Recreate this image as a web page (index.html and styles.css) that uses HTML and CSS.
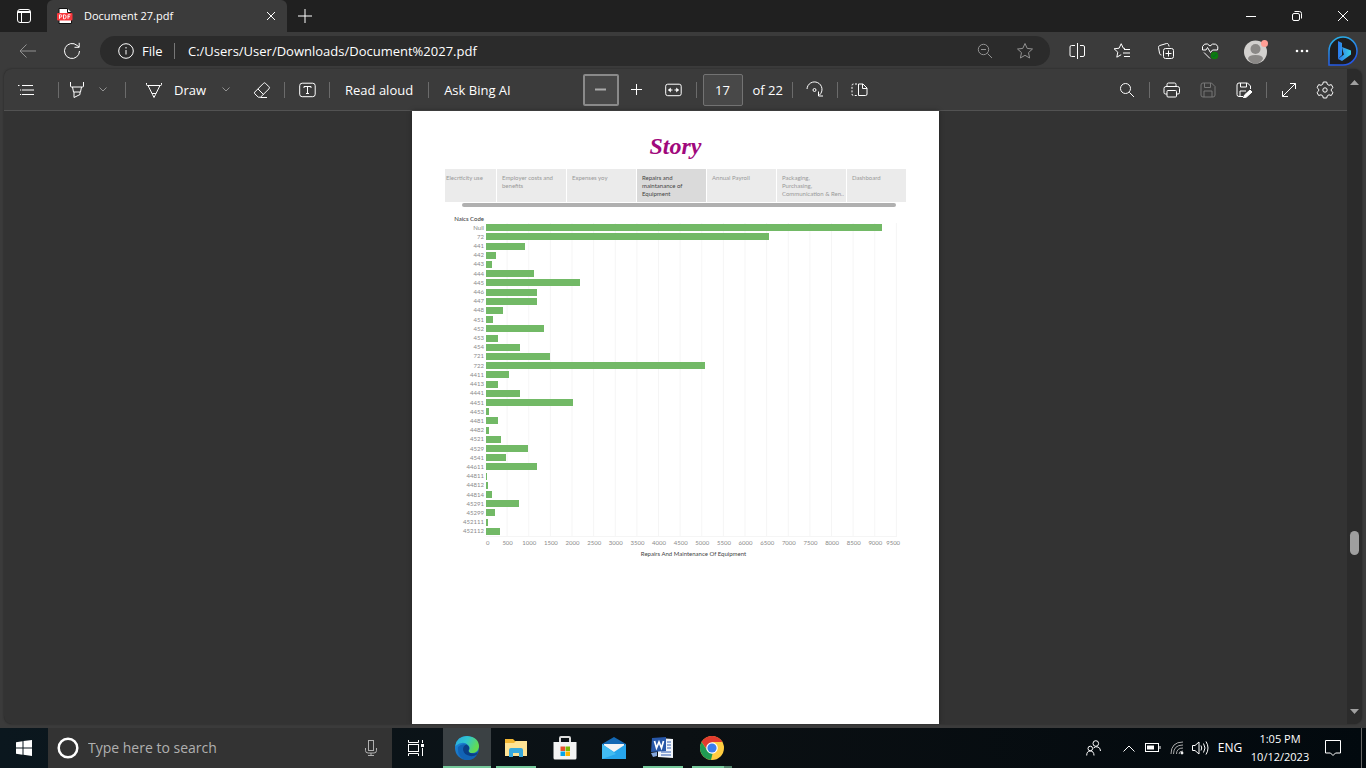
FILE: index.html
```html
<!DOCTYPE html>
<html lang="en">
<head>
<meta charset="utf-8">
<title>Document 27.pdf</title>
<link rel="stylesheet" href="styles.css">
</head>
<body>
<header class="titlebar">
  <button class="tab-menu" aria-label="Tab actions"><svg width="16" height="16" viewBox="0 0 16 16"><rect x="1.5" y="1.5" width="13" height="13" rx="2.5"/><path d="M2 3.5h12M2 4.5h12M5.500 5v9" /></svg></button>
  <div class="tab">
    <svg class="pdf-icon" width="16" height="16" viewBox="0 0 16 16"><path d="M2 .5h8.500l4 4V15.500H2z" fill="#fff" stroke="#111"/><path d="M10.500 .5v4h4" fill="#fff" stroke="#111"/><rect x="0" y="5" width="15.500" height="7.500" rx="1" fill="#f8383d" stroke="none"/><path d="M2.500 10.800V6.800h1.200a1.100 1.100 0 0 1 0 2.300H2.500M6.500 6.800h1q1.600 0 1.600 2t-1.600 2h-1zM11 10.800v-4h2.500M11 8.700h2" fill="none" stroke="#fff" stroke-width=".9"/></svg>
    <span class="tab-title">Document 27.pdf</span>
    <button class="tab-close" aria-label="Close tab"><svg width="10" height="10" viewBox="0 0 10 10"><path d="M1 1l8 8M9 1L1 9"/></svg></button>
  </div>
  <button class="new-tab" aria-label="New tab"><svg width="14" height="14" viewBox="0 0 14 14"><path d="M7 0v14M0 7h14"/></svg></button>
  <div class="window-buttons">
    <button aria-label="Minimize"><svg width="10" height="10" viewBox="0 0 10 10"><path d="M0 5.500h10"/></svg></button>
    <button aria-label="Restore"><svg width="10" height="10" viewBox="0 0 10 10"><rect x=".5" y="2.500" width="7" height="7" rx="1.500"/><path d="M2.500 .5h5q2 0 2 2v5"/></svg></button>
    <button aria-label="Close"><svg width="10" height="10" viewBox="0 0 10 10"><path d="M0 0l10 10M10 0L0 10"/></svg></button>
  </div>
</header>

<nav class="address-row">
  <button class="nav-button dim" aria-label="Back"><svg width="18" height="14" viewBox="0 0 18 14"><path d="M17 7H1M7.500 .5L1 7l6.500 6.500"/></svg></button>
  <button class="nav-button" aria-label="Refresh"><svg width="18" height="18" viewBox="0 0 18 18"><path d="M16.500 9a7.500 7.500 0 1 1-2.500-5.600L16 5M16.200 .8V5.300H11.500"/></svg></button>
  <div class="address">
    <svg width="16" height="16" viewBox="0 0 16 16"><circle cx="8" cy="8" r="7.300"/><path d="M8 7v4.500M8 4v1.500"/></svg>
    <span class="scheme">File</span>
    <input class="url" type="text" aria-label="Address" value="C:/Users/User/Downloads/Document%2027.pdf">
    <button class="dim" aria-label="Zoom"><svg width="16" height="16" viewBox="0 0 16 16"><circle cx="6.500" cy="6.500" r="5.200"/><path d="M10.500 10.500l4.500 4.500M4 6.500h5"/></svg></button>
    <button class="dim" aria-label="Add to favorites"><svg width="18" height="18" viewBox="0 0 18 18"><path d="M9 1.500l2.200 4.900 5.300.6-4 3.600 1.100 5.400L9 13.300 4.400 16l1.100-5.400-4-3.600 5.300-.6z"/></svg></button>
  </div>
  <div class="browser-tools">
    <button aria-label="Split screen"><svg width="18" height="18" viewBox="0 0 18 18"><path d="M7 3.500H3.500Q2 3.500 2 5v8Q2 14.500 3.500 14.500H7M9.500 1v16M12 3.500h3q1.500 0 1.500 1.500v8q0 1.500-1.500 1.500h-3"/></svg></button>
    <button aria-label="Favorites"><svg width="18" height="18" viewBox="0 0 18 18"><path d="M12 6.500L10.300 6.200 8.200 1.700 6.100 6.200l-5 .6 3.700 3.400-1 5 4.400-2.500M11 7.500h6M10 11h7M11 14.500h6"/></svg></button>
    <button aria-label="Collections"><svg width="18" height="18" viewBox="0 0 18 18"><rect x="6.500" y="6.500" width="10" height="10" rx="2"/><path d="M11.500 8.500v6M8.500 11.500h6M4.500 13Q3 13 2.600 11.500L1.500 5.500Q1.300 4 2.800 3.500L9.500 1.500q1.500-.3 2 1l.6 2"/></svg></button>
    <button aria-label="Browser essentials"><svg width="18" height="18" viewBox="0 0 18 18"><path d="M9 4Q6.500 .8 3.500 2.200 .5 4 1.500 8H5l1.500-2.500 3 5L11.500 8h5Q17.800 3.800 14.500 2.200 11.500 1 9 4M3 10.500L9 16.500"/><circle cx="13.500" cy="13.500" r="3.800" fill="#0e7a0d" stroke="none"/><path d="M11.700 13.700l1.200 1.200 2.500-3" stroke="#063"/></svg></button>
    <button aria-label="Profile"><svg width="24" height="26" viewBox="0 0 24 26" stroke="none"><circle cx="11.500" cy="14" r="11.500" fill="#d2d0ce"/><circle cx="11.500" cy="11" r="5" fill="#8a8886"/><path d="M4 21q0-4 7.500-4t7.500 4q-3 4.500-7.500 4.500T4 21z" fill="#8a8886"/><circle cx="20.500" cy="5.500" r="3.500" fill="#ff9f95"/></svg></button>
    <button aria-label="Settings and more"><svg width="14" height="4" viewBox="0 0 14 4" stroke="none"><g fill="#fff"><circle cx="2" cy="2" r="1.300"/><circle cx="7" cy="2" r="1.300"/><circle cx="12" cy="2" r="1.300"/></g></svg></button>
    <button aria-label="Bing"><svg width="30" height="30" viewBox="0 0 30 30"><defs><linearGradient id="ring" x2=".3" y2="1"><stop stop-color="#29b9ea"/><stop offset="1" stop-color="#2457e5"/></linearGradient><linearGradient id="bee" x2="1"><stop stop-color="#2a78ed"/><stop offset="1" stop-color="#3bd0e5"/></linearGradient></defs><path d="M1 29V15A14 14 0 1 1 15 29z" fill="#1d1d1f" stroke="url(#ring)" stroke-width="1.500"/><path d="M10 5l4 2v12l-4 4zM14 11l9 3.500v4L14 25l-4-2 6-4.500-1-3z" fill="url(#bee)" stroke="none"/></svg></button>
  </div>
</nav>

<main class="viewer">
  <section class="viewer-body">
    <div class="toolbar">
      <button class="tool first" aria-label="Contents"><svg width="18" height="12" viewBox="0 0 18 12"><path d="M5 1.500h11M5 6h12M5 10.500h12M1 1.500h1.500M3 6h1.200M3 10.500h1.200"/></svg></button>
      <i class="sep"></i>
      <button class="tool narrow" aria-label="Highlight"><svg width="16" height="18" viewBox="0 0 16 18"><path d="M1.500 1v4q0 1 1 1h11q1 0 1-1V1M3.500 6l1 5h7l1-5M5 11v5.500l6-3V11"/></svg></button>
      <button class="tool" aria-label="Highlight options"><svg class="dim" width="8" height="5" viewBox="0 0 8 5"><path d="M.5 .5L4 4 7.500 .5"/></svg></button>
      <i class="sep"></i>
      <button class="tool draw"><svg width="18" height="18" viewBox="0 0 18 18"><path d="M1.500 2v1.500q0 1 1 1h13q1 0 1-1V2M3 4.500l4.500 9 1.500 3 1.500-3 4.500-9M7 12.500h4"/></svg>Draw</button>
      <button class="tool" aria-label="Draw options"><svg class="dim" width="8" height="5" viewBox="0 0 8 5"><path d="M.5 .5L4 4 7.500 .5"/></svg></button>
      <button class="tool eraser" aria-label="Erase"><svg width="18" height="18" viewBox="0 0 18 18"><path d="M1.800 11L10.500 2.300q1-1 2 0l3.500 3.500q1 1 0 2L7.500 16.200H5.300L1.800 12.800q-.8-.9 0-1.800zM5 8l5.500 5.500M7.500 16.500H14"/></svg></button>
      <i class="sep"></i>
      <button class="tool" aria-label="Add text"><svg width="17" height="16" viewBox="0 0 17 16"><rect x=".7" y="1.200" width="15.500" height="13.500" rx="2.500"/><path d="M5 6V4.500h7V6M8.500 4.500v7M7 11.500h3"/></svg></button>
      <i class="sep"></i>
      <button class="tool text">Read aloud</button>
      <i class="sep"></i>
      <button class="tool text">Ask Bing AI</button>
      <div class="space-before"></div>
      <button class="tool zoom-out" aria-label="Zoom out"><svg width="11" height="3" viewBox="0 0 11 3"><path d="M0 1.500h11" stroke="#aaa" stroke-width="2"/></svg></button>
      <button class="tool zoom-in" aria-label="Zoom in"><svg width="11" height="11" viewBox="0 0 11 11"><path d="M5.500 0v11M0 5.500h11"/></svg></button>
      <button class="tool fit" aria-label="Fit to width"><svg width="17" height="14" viewBox="0 0 17 14"><rect x=".7" y="1.200" width="15.500" height="11.500" rx="2"/><path d="M7.500 7H3.500M9.500 7h4"/><path d="M5.800 4.500v5L3 7zM11.200 4.500v5L14 7z" fill="#fff" stroke="none"/></svg></button>
      <i class="sep tight"></i>
      <input class="page-number" id="page" type="text" value="17"><label class="page-total" for="page">of 22</label>
      <i class="sep"></i>
      <button class="tool" aria-label="Rotate"><svg width="18" height="18" viewBox="0 0 18 18"><path d="M1 8a7.500 7.500 0 1 1 12.500 6M12.500 10.500V15h4.500"/><circle cx="8.500" cy="9" r="1.500"/></svg></button>
      <i class="sep"></i>
      <button class="tool" aria-label="Page view"><svg width="17" height="14" viewBox="0 0 17 14"><path d="M7.500 1H12l4 4v6q0 1.500-1.500 1.500h-7zM11.500 1v4.500H16"/><path d="M6 1H2.500Q1 1 1 2.500V11q0 1.500 1.500 1.500H6" stroke-dasharray="2 1.500"/></svg></button>
      <div class="space-after"></div>
      <button class="tool" aria-label="Find"><svg width="16" height="16" viewBox="0 0 16 16"><circle cx="6.500" cy="6.500" r="5"/><path d="M10.300 10.300L15 15"/></svg></button>
      <i class="sep"></i>
      <div class="file-tools">
        <button class="tool" aria-label="Print"><svg width="18" height="16" viewBox="0 0 18 16"><path d="M4 4V2.500Q4 1 5.500 1h6Q13 1 13 2.500V4M4 12H2.500Q1 12 1 10.500V6.500Q1 4.500 3 4.500h11.500q2 0 2 2v4q0 1.500-1.500 1.500H13.500"/><rect x="4" y="8.500" width="9.500" height="6.500" rx="1"/></svg></button>
        <button class="tool faint" aria-label="Save"><svg width="16" height="16" viewBox="0 0 16 16"><path d="M3 1h8.500L15 4.500V13q0 2-2 2H3q-2 0-2-2V3q0-2 2-2zM4.500 1v4.500h6V1M4 15V9h8v6"/></svg></button>
        <button class="tool" aria-label="Save as"><svg width="17" height="16" viewBox="0 0 17 16"><path d="M7 14.500H3q-2 0-2-2V3q0-2 2-2h8.500L14.500 4v3M4.500 1v4h6V1M4 14V9h6"/><path d="M14 8l2 2-5.500 5-3 1 1-3z" fill="#fff"/></svg></button>
      </div>
      <i class="sep"></i>
      <div class="file-tools">
        <button class="tool" aria-label="Full screen"><svg width="16" height="16" viewBox="0 0 16 16"><path d="M1.500 14.500l13-13M9 1.500h5.500V7M1.500 9v5.500H7"/></svg></button>
        <button class="tool" aria-label="Settings"><svg width="18" height="18" viewBox="0 0 18 18"><path d="M7.300 1h3.400l.6 2.300 1.700 1 2.300-.7 1.700 3-1.700 1.600v1.700l1.700 1.600-1.700 3-2.300-.7-1.700 1-.6 2.200H7.300l-.6-2.200-1.700-1-2.300.7-1.700-3 1.700-1.600V8.200L1 6.600l1.700-3 2.300.7 1.700-1z" stroke-linejoin="round"/><circle cx="9" cy="9" r="2.200"/></svg></button>
      </div>
    </div>

    <article class="page">
      <h1>Story</h1>
      <nav class="story-points">
        <a href="#">Elecrticity use</a>
        <a href="#">Employer costs and benefits</a>
        <a href="#">Expenses yoy</a>
        <a href="#" class="current">Repairs and maintanance of Equipment</a>
        <a href="#">Annual Payroll</a>
        <a href="#">Packaging,<br>Purchasing,<br><span>Communication &amp; Ren..</span></a>
        <a href="#">Dashboard</a>
      </nav>
      <div class="story-scroll"></div>
      <section class="chart">
        <h2>Naics Code</h2>
        <ul class="bars">
          <li><span>Null</span><b style="--v:9150"></b></li>
          <li><span>72</span><b style="--v:6530"></b></li>
          <li><span>441</span><b style="--v:910"></b></li>
          <li><span>442</span><b style="--v:240"></b></li>
          <li><span>443</span><b style="--v:130"></b></li>
          <li><span>444</span><b style="--v:1110"></b></li>
          <li><span>445</span><b style="--v:2175"></b></li>
          <li><span>446</span><b style="--v:1190"></b></li>
          <li><span>447</span><b style="--v:1180"></b></li>
          <li><span>448</span><b style="--v:390"></b></li>
          <li><span>451</span><b style="--v:160"></b></li>
          <li><span>452</span><b style="--v:1335"></b></li>
          <li><span>453</span><b style="--v:275"></b></li>
          <li><span>454</span><b style="--v:780"></b></li>
          <li><span>721</span><b style="--v:1490"></b></li>
          <li><span>722</span><b style="--v:5055"></b></li>
          <li><span>4411</span><b style="--v:540"></b></li>
          <li><span>4413</span><b style="--v:285"></b></li>
          <li><span>4441</span><b style="--v:795"></b></li>
          <li><span>4451</span><b style="--v:2015"></b></li>
          <li><span>4453</span><b style="--v:80"></b></li>
          <li><span>4481</span><b style="--v:275"></b></li>
          <li><span>4482</span><b style="--v:60"></b></li>
          <li><span>4521</span><b style="--v:355"></b></li>
          <li><span>4529</span><b style="--v:970"></b></li>
          <li><span>4541</span><b style="--v:455"></b></li>
          <li><span>44611</span><b style="--v:1190"></b></li>
          <li><span>44811</span><b style="--v:15"></b></li>
          <li><span>44812</span><b style="--v:45"></b></li>
          <li><span>44814</span><b style="--v:150"></b></li>
          <li><span>45291</span><b style="--v:770"></b></li>
          <li><span>45299</span><b style="--v:200"></b></li>
          <li><span>452111</span><b style="--v:45"></b></li>
          <li><span>452112</span><b style="--v:325"></b></li>
        </ul>
        <div class="axis"><span>0</span><span>500</span><span>1000</span><span>1500</span><span>2000</span><span>2500</span><span>3000</span><span>3500</span><span>4000</span><span>4500</span><span>5000</span><span>5500</span><span>6000</span><span>6500</span><span>7000</span><span>7500</span><span>8000</span><span>8500</span><span>9000</span><span>9500</span></div>
        <p class="axis-title">Repairs And Maintenance Of Equipment</p>
      </section>
    </article>
  </section>
  <div class="scrollbar">
    <svg width="9" height="5" viewBox="0 0 9 5"><path d="M0 5L4.500 0 9 5z"/></svg>
    <div class="thumb"></div>
    <svg width="9" height="5" viewBox="0 0 9 5"><path d="M0 0l4.500 5L9 0z"/></svg>
  </div>
</main>

<footer class="taskbar">
  <button class="start" aria-label="Start"><svg width="16" height="16" viewBox="0 0 16 16"><path d="M0 2.200L6.500 1.300V7.500H0zM7.500 1.100L16 0v7.500H7.500zM0 8.500h6.500v6.200L0 13.800zM7.500 8.500H16V16l-8.500-1.200z" fill="#fff" stroke="none"/></svg></button>
  <label class="search">
    <svg width="22" height="22" viewBox="0 0 22 22"><circle cx="11" cy="11" r="9.300" stroke-width="2.500"/></svg>
    <input type="text" placeholder="Type here to search">
    <svg class="mic" width="12" height="18" viewBox="0 0 12 18"><rect x="3.500" y="1.500" width="5" height="10"/><path d="M.5 9v2.500q0 2.500 2.500 2.500h6q2.500 0 2.500-2.500V9M6 14v2.500M3 16.500h6"/></svg>
  </label>
  <div class="apps">
    <button class="app" aria-label="Task view"><svg width="16" height="16" viewBox="0 0 16 16"><path d="M.5 0v2.500h10V0M.5 16v-2.500h10V16"/><rect x=".5" y="4.500" width="10" height="7"/><path d="M14.500 0v3M14.500 8v8"/><path d="M13 5.500h3" stroke-width="3"/></svg></button>
    <button class="app active open" aria-label="Edge"><svg width="24" height="24" viewBox="0 0 24 24" stroke="none"><defs><linearGradient id="eg" x2="1" y2=".4"><stop stop-color="#2aa7e0"/><stop offset=".5" stop-color="#30c6cf"/><stop offset="1" stop-color="#63dc50"/></linearGradient><linearGradient id="eb" y2="1"><stop stop-color="#1c8fe0"/><stop offset="1" stop-color="#1557a8"/></linearGradient></defs><circle cx="12" cy="12" r="12" fill="url(#eb)"/><path d="M.3 10Q2 0 12 0q12 1 12 11-1 6-7 6-4 0-3.500-2Q16 12 13 9 8 4 .3 10z" fill="url(#eg)"/><path d="M8 14q0-4 4-5-5-2-9 2-1 9 7 13 9 1 12-6-5 3-10 1-4-2-4-5z" fill="#1263b5"/><path d="M8 13q0-3 3.500-4.500 4 2 2 6 0 3 5 3 3 0 4.500-1.500l-1 2.500q-5 3-10 .5Q8 17 8 13z" fill="#0a3f86"/></svg></button>
    <button class="app open" aria-label="File Explorer"><svg width="22" height="20" viewBox="0 0 22 20" stroke="none"><path d="M0 1h8l2 2h11q1 0 1 1v14H0z" fill="#f2b632"/><path d="M0 5h9l2-2h11v15H0z" fill="#ffe394"/><path d="M4 19v-7q0-2 2-2h10q2 0 2 2v7h-4v-4H8v4z" fill="#38a9dc"/></svg></button>
    <button class="app" aria-label="Microsoft Store"><svg width="24" height="24" viewBox="0 0 24 24"><path d="M7 6V2q0-1 1-1h8q1 0 1 1v4" stroke="#ddd" stroke-width="2"/><path d="M.5 6h23v16q0 1.500-1.500 1.500H2Q.5 23.500 .5 22z" fill="#f3f3f3" stroke="none"/><g stroke="none"><path d="M7.500 10.500H12V15H7.500z" fill="#e8502a"/><path d="M12.500 10.500H17V15h-4.500z" fill="#7db900"/><path d="M7.500 15.500H12V20H7.500z" fill="#05a4ea"/><path d="M12.500 15.500H17V20h-4.500z" fill="#fbb500"/></g></svg></button>
    <button class="app" aria-label="Mail"><svg width="24" height="22" viewBox="0 0 24 22" stroke="none"><path d="M0 7L12 0l12 7v15H0z" fill="#1468b3"/><path d="M2 7h20v8H2z" fill="#f4f4f4"/><path d="M0 7l12 8L24 7v15H0z" fill="#27a5ec"/><path d="M0 7l14 10-14 5z" fill="#42bcf3"/></svg></button>
    <button class="app open" aria-label="Word"><svg width="24" height="22" viewBox="0 0 24 22" stroke="none"><path d="M7 1l15 1v19L7 20z" fill="#f1f5fb"/><path d="M16 5h4M16 8h4M16 11h4M10 15h10M10 18h10" stroke="#315db2"/><path d="M1 1l14-1v14L0 15z" fill="#2857a8"/><path d="M3.500 4l2 7L8 5l2.500 6 2-7" stroke="#fff" stroke-width="1.700"/><path d="M0 16l6-1v4l-4 1z" fill="#84a6dc"/></svg></button>
    <button class="app open split" aria-label="Chrome"><svg width="24" height="24" viewBox="0 0 24 24" stroke="none"><circle cx="12" cy="12" r="12" fill="#ffcd40"/><path d="M1.600 6A12 12 0 0 1 22.400 6L12 7 7.700 14.500z" fill="#e23b2e"/><path d="M22.400 6H12l4.300 8.500L11 24" fill="#ffcd40"/><path d="M1.600 6l6 9 5 2.500L11 24A12 12 0 0 1 1.600 6z" fill="#209b53"/><circle cx="12" cy="12" r="5.800" fill="#fff"/><circle cx="12" cy="12" r="4.600" fill="#3b7ded"/></svg></button>
  </div>
  <div class="tray">
    <button class="people" aria-label="People"><svg width="15" height="16" viewBox="0 0 15 16"><circle cx="9.800" cy="3.500" r="2.800"/><circle cx="4.300" cy="8.500" r="2.300"/><path d="M.7 15.500q0-4.500 3.600-4.500T8 15.500M7.500 8q2-2 4.500-1 2.500 1 2.500 4"/></svg></button>
    <button class="chevron" aria-label="Show hidden icons"><svg width="12" height="7" viewBox="0 0 12 7"><path d="M.5 6.500L6 1l5.500 5.500"/></svg></button>
    <button aria-label="Battery"><svg width="16" height="10" viewBox="0 0 16 10"><rect x=".5" y=".5" width="13" height="8"/><path d="M15 3v3"/><path d="M2 2.500h7v4H2z" fill="#fff" stroke="none"/></svg></button>
    <button aria-label="Network"><svg width="14" height="14" viewBox="0 0 14 14"><path d="M1 13Q1 1 13 1M3.500 13Q3.500 4 13 4M6.500 13Q6.500 7 13 7M9 13q0-3 4-3" stroke="#aaa"/><circle cx="12" cy="12" r="1" fill="#fff"/></svg></button>
    <button aria-label="Volume"><svg width="18" height="14" viewBox="0 0 18 14"><path d="M.5 4.500H3L7 1v12L3 9.500H.5zM9 4.500q1.500 2.500 0 5M11.500 2.500q3 4.500 0 9M14 .5q4 6.500 0 13"/></svg></button>
    <button class="language">ENG</button>
    <button class="clock"><time>1:05 PM</time><time>10/12/2023</time></button>
    <button class="notices" aria-label="Notifications"><svg width="16" height="17" viewBox="0 0 16 17"><path d="M.5 .5h15v12.500h-5L8 15.500 5.500 13h-5z"/></svg></button>
  </div>
</footer>
</body>
</html>
```
FILE: styles.css
```css
* { box-sizing: border-box; }
body {
  margin: 0;
  height: 100vh;
  display: flex;
  flex-direction: column;
  overflow: hidden;
  background: #3b3b3b;
  color: #fff;
  font: 13px/20px "Open Sans", "Noto Sans", sans-serif;
}
button {
  display: flex;
  align-items: center;
  justify-content: center;
  padding: 0;
  border: 0;
  background: none;
  color: inherit;
  font: inherit;
  white-space: nowrap;
}
input { border: 0; padding: 0; background: none; color: inherit; font: inherit; min-width: 0; outline: 0; }
svg { flex: none; fill: none; stroke: #fff; }
svg [stroke="none"] { stroke: none; }
svg[stroke="none"] { stroke: none; }
.dim svg, svg.dim { stroke: #929292; }
.faint svg { stroke: #777; }

/* Title bar */
.titlebar { display: flex; flex: none; height: 32px; background: #202020; }
.tab-menu { width: 47px; }
.tab {
  display: flex;
  align-items: center;
  width: 240px;
  padding: 0 10px;
  border-radius: 6px 6px 0 0;
  background: #3b3b3b;
}
.tab-title { flex: 1; margin-left: 11px; font-size: 11px; }
.tab-close { width: 12px; }
.new-tab { width: 36px; }
.window-buttons { display: flex; margin-left: auto; }
.window-buttons button { width: 46px; }

/* Address row */
.address-row { display: flex; flex: none; align-items: center; height: 37px; padding: 0 4px 0 6px; }
.nav-button { width: 44px; }
.address {
  display: flex;
  flex: 1;
  align-items: center;
  height: 30px;
  margin: 0 5px 0 6px;
  padding: 0 5px 0 18px;
  border-radius: 15px;
  background: #2b2b2b;
}
.scheme { width: 33px; margin-left: 8px; border-right: 1px solid #777; line-height: 16px; }
.url { flex: 1; margin-left: 13px; }
.address button { width: 40px; }
.browser-tools { display: grid; grid-template-columns: 44px 45px 44px 44px 48px 44px 38px; align-items: center; }

/* Document viewer */
.viewer {
  display: flex;
  flex: 1;
  min-height: 0;
  margin: 0 4px 4px;
  border-radius: 8px;
  overflow: hidden;
  background: #333;
  box-shadow: 0 0 2px #222;
}
.viewer-body { display: flex; flex: 1; flex-direction: column; min-width: 0; }
.toolbar {
  display: flex;
  flex: none;
  align-items: center;
  height: 42px;
  padding-right: 7px;
  border-bottom: 1px solid #525252;
  background: #3b3b3b;
}
.tool { flex: none; width: 30px; height: 32px; }
.tool.first { width: 47px; padding-right: 4px; }
.tool.narrow { width: 22px; }
.tool.draw { gap: 11px; width: 78px; padding-left: 7px; }
.tool.eraser { width: 36px; padding-left: 6px; }
.tool.text { width: auto; padding: 0 8px; }
.tool.zoom-out { width: 36px; border: 2px solid #8a8a8a; border-radius: 2px; background: #484848; }
.tool.zoom-in { width: 35px; }
.tool.fit { width: 36px; padding-left: 4px; }
.sep { flex: none; width: 1px; height: 16px; margin: 0 7px; background: #6b6b6b; }
.sep.tight { margin: 0 6px; }
.space-before { flex: 64; }
.space-after { flex: 238; }
.page-number {
  width: 40px;
  height: 32px;
  border: 1px solid #737373;
  border-radius: 2px;
  background: #484848;
  text-align: center;
}
.page-total { width: 42px; padding-left: 10px; white-space: nowrap; }
.file-tools { display: flex; gap: 6px; }

.scrollbar {
  display: flex;
  flex-direction: column;
  align-items: center;
  justify-content: space-between;
  width: 15px;
  padding: 11px 0 10px;
  background: #2b2b2b;
}
.scrollbar svg { fill: #a0a0a0; stroke: none; }
.thumb { width: 9px; height: 24px; margin-top: 292px; border-radius: 5px; background: #9f9f9f; }

/* PDF page */
.page {
  flex: 1;
  width: 100%;
  max-width: 527px;
  margin: 0 auto;
  padding: 21px 33px 0;
  background: #fff;
  color: #8a8a8a;
  font: 6px/8px Lato, "Open Sans", sans-serif;
  box-shadow: 0 0 4px #222;
}
.page h1 {
  margin: 0 0 9px;
  color: #a0087c;
  font: italic bold 24px/28px "Liberation Serif", serif;
  text-align: center;
}
.story-points { display: grid; grid-template-columns: 51fr repeat(5, 69fr) 59fr; gap: 1px; height: 33px; }
.story-points a { padding: 5px 0 0 5px; background: #ebebeb; color: #999; text-decoration: none; }
.story-points a:first-child { padding-left: 1px; white-space: nowrap; }
.story-points span { white-space: nowrap; }
.story-points .current { padding-right: 8px; background: #dadada; color: #444; }
.story-scroll { height: 4px; margin: 1px 10px 0 17px; border-radius: 2px; background: #b0b0b0; }
.chart { padding: 8px 9px 0 0; }
.chart h2 { width: 39px; margin: 0; color: #444; font-size: 6px; line-height: 8px; font-weight: 500; text-align: right; white-space: nowrap; }
.bars { display: grid; grid-template-rows: repeat(34, 1fr); height: 313px; margin: 0; padding: 0; list-style: none; }
.bars li { display: grid; grid-template-columns: 39px 1fr; gap: 2px; align-items: center; min-height: 0; text-align: right; }
.bars b { display: flex; align-items: center; height: 100%; background: linear-gradient(to left, #f5f5f5 1px, transparent 1px) 0 0 / calc(100% / 19) 100%; }
.bars b::before { content: ""; width: calc(var(--v) / 9500 * 100%); height: 7px; background: #72b966; }
.axis {
  display: grid;
  grid-template-columns: minmax(0, 1fr) repeat(18, minmax(0, 2fr)) minmax(0, 1fr);
  margin-left: 41px;
  padding-top: 2px;
  border-top: 1px solid #f5f5f5;
}
.axis span { text-align: center; }
.axis span:first-child, .axis span:last-child { text-align: left; }
.axis-title { margin: 3px 0 0 45px; color: #444; text-align: center; }

/* Taskbar */
.taskbar { display: flex; flex: none; height: 40px; background: linear-gradient(90deg, #0b171e, #0b1013 50%, #02090e); }
.start { width: 48px; }
.search { display: flex; align-items: center; width: 344px; padding: 0 15px 0 9px; background: #333; }
.search input { flex: 1; margin-left: 9px; font-size: 14px; }
.search input::placeholder { color: #b0b0b0; opacity: 1; }
.mic { stroke: #b0b0b0; }
.apps { display: flex; gap: 1px; }
.app { position: relative; width: 48px; }
.app:first-child { width: 50px; padding-right: 2px; }
.app.active { background: #3b4144; }
.app.open::after { content: ""; position: absolute; right: 4px; bottom: 0; left: 4px; height: 2px; background: #76c99b; }
.app.active::after { right: 0; left: 0; }
.app.split::after { background: linear-gradient(90deg, #76c99b 32px, #52836a 32px); }
.tray { display: flex; margin-left: auto; padding-right: 4px; }
.tray button { width: 24px; }
.tray .people { width: 36px; }
.tray .chevron { margin-left: 6px; }
.tray .language { width: 34px; font-size: 12px; }
.tray .clock { flex-direction: column; width: 66px; font-size: 11px; line-height: 18px; }
.tray .notices { width: 49px; padding-right: 8px; border-right: 1px solid #666; }
```
